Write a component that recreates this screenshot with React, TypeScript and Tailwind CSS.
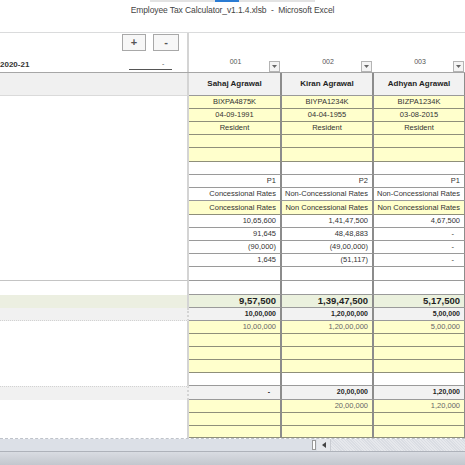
import React from 'react';

type Kind = 'name' | 'yellow' | 'white' | 'gray' | 'green';
type TextStyle = 'center' | 'right' | 'big' | 'boldsm' | 'light';

interface Row {
  h: 12 | 13 | 14 | 23;
  kind: Kind;
  text?: TextStyle;
  cells?: [string, string, string];
  left?: string;
}

const HEIGHTS: Record<number, string> = {
  12: 'h-[12px]',
  13: 'h-[13px]',
  14: 'h-[14px]',
  23: 'h-[23px]',
};

const BG: Record<Kind, string> = {
  name: 'bg-[#f2f2f2]',
  yellow: 'bg-[#ffffcc]',
  white: 'bg-white',
  gray: 'bg-[#f2f2f2]',
  green: 'bg-[#ebf1de]',
};

const TEXT: Record<TextStyle, string> = {
  center: 'justify-center text-[7.5px] text-[#333]',
  right: 'justify-end text-[7.5px] text-[#333]',
  big: 'justify-end text-[9.5px] font-bold text-[#1f1f1f]',
  boldsm: 'justify-end text-[7px] font-bold text-[#1f1f1f]',
  light: 'justify-end text-[7.5px] text-[#666]',
};

const rows: Row[] = [
  { h: 23, kind: 'name', cells: ['Sahaj Agrawal', 'Kiran Agrawal', 'Adhyan Agrawal'], left: 'bg-[#f0f0f0] border-b border-b-[#dadada]' },
  { h: 13, kind: 'yellow', text: 'center', cells: ['BIXPA4875K', 'BIYPA1234K', 'BIZPA1234K'] },
  { h: 13, kind: 'yellow', text: 'center', cells: ['04-09-1991', '04-04-1955', '03-08-2015'] },
  { h: 13, kind: 'yellow', text: 'center', cells: ['Resident', 'Resident', 'Resident'] },
  { h: 13, kind: 'yellow' },
  { h: 14, kind: 'yellow' },
  { h: 13, kind: 'white' },
  { h: 13, kind: 'white', text: 'right', cells: ['P1', 'P2', 'P1'] },
  { h: 13, kind: 'white', text: 'right', cells: ['Concessional Rates', 'Non-Concessional Rates', 'Non-Concessional Rates'] },
  { h: 14, kind: 'yellow', text: 'right', cells: ['Concessional Rates', 'Non Concessional Rates', 'Non Concessional Rates'] },
  { h: 13, kind: 'white', text: 'right', cells: ['10,65,600', '1,41,47,500', '4,67,500'] },
  { h: 13, kind: 'white', text: 'right', cells: ['91,645', '48,48,883', '-'] },
  { h: 13, kind: 'white', text: 'right', cells: ['(90,000)', '(49,00,000)', '-'] },
  { h: 13, kind: 'white', text: 'right', cells: ['1,645', '(51,117)', '-'] },
  { h: 14, kind: 'white', left: 'border-b border-b-[#c4c4c4]' },
  { h: 14, kind: 'white' },
  { h: 13, kind: 'green', text: 'big', cells: ['9,57,500', '1,39,47,500', '5,17,500'], left: 'bg-[#ecefe1]' },
  { h: 13, kind: 'gray', text: 'boldsm', cells: ['10,00,000', '1,20,00,000', '5,00,000'], left: 'bg-[#f1f1f1] border-b border-dotted border-b-[#d2d2d2]' },
  { h: 13, kind: 'yellow', text: 'light', cells: ['10,00,000', '1,20,00,000', '5,00,000'] },
  { h: 13, kind: 'yellow' },
  { h: 13, kind: 'yellow' },
  { h: 13, kind: 'yellow' },
  { h: 13, kind: 'white' },
  { h: 14, kind: 'gray', text: 'boldsm', cells: ['-', '20,00,000', '1,20,000'], left: 'bg-[#f1f1f1] border-t border-dotted border-t-[#d2d2d2]' },
  { h: 13, kind: 'yellow', text: 'light', cells: ['', '20,00,000', '1,20,000'] },
  { h: 13, kind: 'yellow' },
  { h: 12, kind: 'yellow' },
];

const COL_W = ['w-[93px]', 'w-[92px]', 'w-[92px]'];

const SheetRow: React.FC<{ row: Row }> = ({ row }) => {
  const lineColor = row.kind === 'yellow' ? 'border-b-[#8f8f7a]' : 'border-b-[#9a9a9a]';
  const textCls = row.kind === 'name' ? 'justify-center text-[8px] font-bold text-[#1f1f1f]' : TEXT[row.text ?? 'right'];
  return (
    <div className={`flex shrink-0 ${HEIGHTS[row.h]}`}>
      <div className={`w-[189px] shrink-0 border-r-2 border-r-[#d4d4d4] ${row.left ?? 'bg-white'}`} />
      {COL_W.map((w, i) => {
        const v = row.cells?.[i] ?? '';
        return (
          <div
            key={i}
            className={`${w} shrink-0 flex items-center whitespace-nowrap overflow-hidden border-b border-r-2 border-r-[#8c8c8c] ${lineColor} ${BG[row.kind]} ${textCls} ${v === '-' ? 'pr-[10px]' : 'px-[4px]'}`}
          >
            {v}
          </div>
        );
      })}
    </div>
  );
};

const ColHeader: React.FC<{ label: string; w: string }> = ({ label, w }) => (
  <div className={`${w} shrink-0 relative flex items-end justify-center pb-[5px]`}>
    <span className="text-[7px] text-[#555]">{label}</span>
    <div className="absolute right-[2px] bottom-[0px] w-[11px] h-[11px] border border-[#b4b4b4] bg-[#f4f4f4] flex items-center justify-center">
      <svg width="5" height="3" viewBox="0 0 5 3">
        <path d="M0 0 L5 0 L2.5 3 Z" fill="#666" />
      </svg>
    </div>
  </div>
);

const App: React.FC = () => {
  return (
    <div className="w-[465px] h-[465px] overflow-hidden bg-white flex flex-col font-['Liberation_Sans',Arial,sans-serif]">
      {/* title bar */}
      <div className="h-[33px] shrink-0 border-b border-b-[#dadbdc] flex flex-col">
        <div className="flex h-[2px] ml-[150px]">
          <div className="w-[65px] bg-[#e3e3e3]" />
          <div className="w-[24px] bg-[#2b7cd3]" />
          <div className="w-[76px] bg-[#e3e3e3]" />
        </div>
        <div className="flex justify-center pt-[2px] text-[8.5px] text-[#444] tracking-[-0.1px]">
          Employee Tax Calculator_v1.1.4.xlsb&nbsp; -&nbsp; Microsoft Excel
        </div>
      </div>

      {/* header area */}
      <div className="h-[40px] shrink-0 flex border-b border-b-[#a6a6a6]">
        <div className="w-[189px] shrink-0 border-r-2 border-r-[#d4d4d4] flex flex-col">
          <div className="flex justify-end gap-[7px] pr-[8px] pt-[1px]">
            <div className="w-[24px] h-[17px] border border-[#a8a8a8] bg-[#f7f7f7] flex items-center justify-center text-[11px] font-bold text-[#555]">+</div>
            <div className="w-[26px] h-[17px] border border-[#a8a8a8] bg-[#f7f7f7] flex items-center justify-center text-[11px] font-bold text-[#555]">-</div>
          </div>
          <div className="mt-auto mb-[1px] h-[13px] flex items-center">
            <span className="text-[8px] font-bold text-[#333]">2020-21</span>
            <div className="ml-[100px] w-[43px] h-[11px] border-b border-b-[#555] flex items-center justify-end pr-[8px] text-[7px] text-[#555]">-</div>
          </div>
        </div>
        <ColHeader label="001" w="w-[93px]" />
        <ColHeader label="002" w="w-[92px]" />
        <ColHeader label="003" w="w-[92px]" />
      </div>

      {/* grid */}
      <div className="h-[365px] shrink-0 flex flex-col overflow-hidden">
        {rows.map((r, i) => (
          <SheetRow key={i} row={r} />
        ))}
      </div>

      {/* sheet tabs + horizontal scrollbar */}
      <div className="h-[13px] shrink-0 flex border-t border-dashed border-t-[#bfc3ca]">
        <div className="w-[312px] shrink-0 bg-[#dce0e7]" />
        <div className="w-[5px] shrink-0 bg-[#dce0e7] flex items-center">
          <div className="w-[4px] h-[10px] bg-white border border-[#9a9a9a]" />
        </div>
        <div className="w-[13px] shrink-0 bg-[#e6e8ec] flex items-center justify-center">
          <svg width="4" height="6" viewBox="0 0 4 6">
            <path d="M4 0 L0 3 L4 6 Z" fill="#444" />
          </svg>
        </div>
        <div className="flex-1 border-l border-[#c9ccd2] bg-[repeating-linear-gradient(45deg,#e6e8ec_0px,#e6e8ec_1px,#dadde3_1px,#dadde3_2px)]" />
      </div>

      {/* status bar */}
      <div className="flex-1 border-t border-t-[#aeb2ba] bg-linear-to-b from-[#d9dce2] to-[#c3c7ce]" />
    </div>
  );
};

export default App;
